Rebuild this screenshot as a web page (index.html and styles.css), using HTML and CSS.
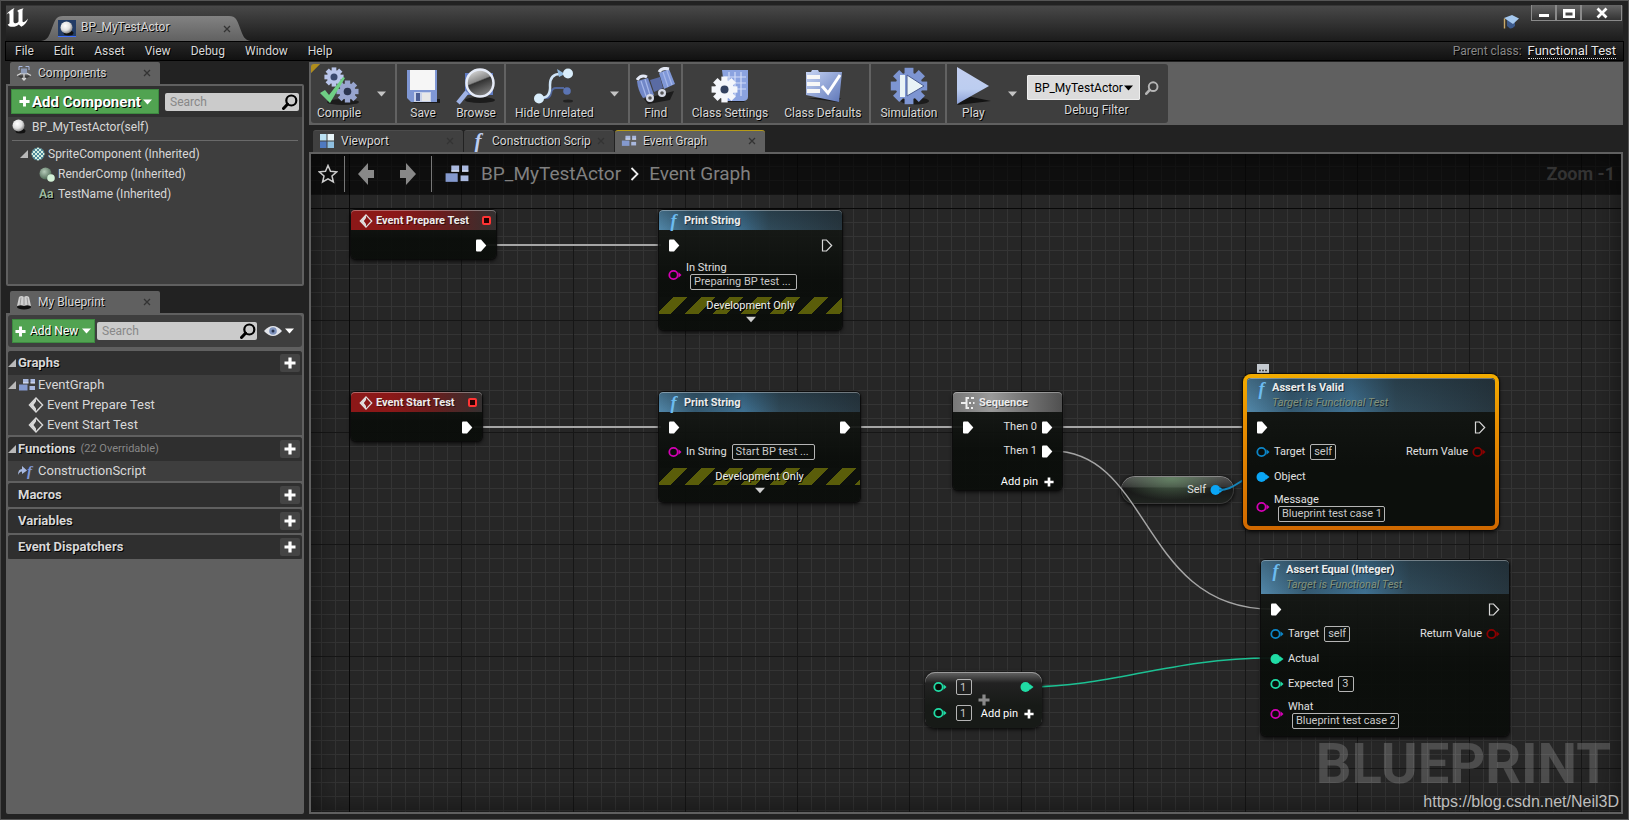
FILE: index.html
```html
<!DOCTYPE html>
<html lang="en">
<head>
<meta charset="utf-8">
<title>BP_MyTestActor</title>
<link rel="stylesheet" href="styles.css">
</head>
<body>
<svg class="defs" aria-hidden="true">
  <defs>
    <linearGradient id="g-blue" x1="0" y1="0" x2="1" y2="1"><stop offset="0" stop-color="#c9d6f5"/><stop offset="1" stop-color="#5d76b8"/></linearGradient>
    <linearGradient id="g-play" x1="0" y1="0" x2="0" y2="1"><stop offset="0" stop-color="#c3cff0"/><stop offset=".6" stop-color="#bccdf0"/><stop offset="1" stop-color="#8b9fd6"/></linearGradient>
    <radialGradient id="g-ball" cx=".4" cy=".35" r=".65"><stop offset="0" stop-color="#fff"/><stop offset=".6" stop-color="#e0e0e0"/><stop offset="1" stop-color="#888"/></radialGradient>
    <radialGradient id="g-green" cx=".4" cy=".35" r=".65"><stop offset="0" stop-color="#b5cbb9"/><stop offset="1" stop-color="#4f6b57"/></radialGradient>
    <linearGradient id="g-lens" x1="0" y1="0" x2=".4" y2="1"><stop offset="0" stop-color="#eee"/><stop offset=".5" stop-color="#8b8b8b"/><stop offset=".55" stop-color="#333"/><stop offset="1" stop-color="#777"/></linearGradient>
    <linearGradient id="g-tab" x1="0" y1="0" x2="0" y2="1"><stop offset="0" stop-color="#828282"/><stop offset="1" stop-color="#616161"/></linearGradient>
    <pattern id="p-check" width="4" height="4" patternUnits="userSpaceOnUse"><rect width="4" height="4" fill="#d5efe0"/><rect width="2" height="2" fill="#4f8a9c"/><rect x="2" y="2" width="2" height="2" fill="#4f8a9c"/></pattern>
  </defs>
  <symbol id="i-plus" viewBox="0 0 12 12"><path d="M4.4 0.5h3.2v3.9h3.9v3.2H7.600v3.900H4.400V7.600H.5V4.400h3.900z" fill="currentColor"/></symbol>
  <symbol id="i-caret" viewBox="0 0 9 6"><path d="M0 0.500h9L4.500 5.500z" fill="currentColor"/></symbol>
  <symbol id="i-close" viewBox="0 0 8 8"><path d="M1 1l6 6M7 1L1 7" stroke="currentColor" stroke-width="1.300" fill="none"/></symbol>
  <symbol id="i-search" viewBox="0 0 16 16"><circle cx="9.300" cy="6.500" r="5" fill="none" stroke="currentColor" stroke-width="2.200"/><path d="M5.500 10.200L1.500 14.500" stroke="currentColor" stroke-width="3" stroke-linecap="round"/></symbol>
  <symbol id="i-tri" viewBox="0 0 8 8"><path d="M8 0v8H0z" fill="#b9b9b9"/></symbol>
  <symbol id="i-ball" viewBox="0 0 14 15"><ellipse cx="8.500" cy="12" rx="5" ry="2.500" fill="#111"/><circle cx="6.500" cy="6.500" r="6" fill="url(#g-ball)"/></symbol>
  <symbol id="i-event" viewBox="0 0 16 16"><path d="M8 1l6.600 7L8 15 1.400 8z" fill="none" stroke="currentColor" stroke-width="1.400"/><path d="M8 1.500v3L5.500 8 8 11.500v3L1.800 8z" fill="currentColor"/></symbol>
  <symbol id="i-graph" viewBox="0 0 18 14"><path d="M5 1h5.500v4H5zM12.500 1H17v4h-4.500z" fill="#a9b8de"/><path d="M1 6.500h8.500v6H1z" fill="#8499ce"/><path d="M11.500 8H17v4h-5.500z" fill="#a9b8de"/><path d="M5 5h5.500M12.500 5H17" stroke="#e6edff"/></symbol>
  <symbol id="i-exec" viewBox="0 0 12 13"><path d="M1 1.500q0-1 1-1h4L11.300 6.500 6 12.500H2q-1 0-1-1z" fill="#fff"/></symbol>
  <symbol id="i-exec-o" viewBox="0 0 12 13"><path d="M1.500 1h4L10.700 6.500 5.500 12h-4z" fill="none" stroke="#d8d8d8" stroke-width="1.200"/></symbol>
  <symbol id="i-pin" viewBox="0 0 14 12"><circle cx="5.500" cy="6" r="4.200" fill="#0a0d0a" stroke="currentColor" stroke-width="1.800"/><path d="M10.500 3.200L13.500 6l-3 2.800z" fill="currentColor"/></symbol>
  <symbol id="i-pin-f" viewBox="0 0 14 12"><circle cx="5.500" cy="6" r="5" fill="currentColor"/><path d="M10 3.200L13.500 6l-3.500 2.800z" fill="currentColor"/></symbol>
  <symbol id="i-gear" viewBox="-12 -12 24 24"><g fill="currentColor"><rect x="-2.800" y="-11.500" width="5.600" height="23"/><rect x="-2.800" y="-11.500" width="5.600" height="23" transform="rotate(45)"/><rect x="-2.800" y="-11.500" width="5.600" height="23" transform="rotate(90)"/><rect x="-2.800" y="-11.500" width="5.600" height="23" transform="rotate(135)"/><circle r="8.500"/></g></symbol>
</svg>

<div class="window">
  <header class="titlebar">
    <svg class="logo" viewBox="0 0 24 20" role="img" aria-label="Unreal"><path d="M0 7C2 4 5 1.500 8.500 0 7.600 1.300 7.500 2 7.500 4v9.500c0 1 .9 1.800 2.200 1.800 1.300 0 2.300-.9 2.800-1.700V4.800c0-1.300-.6-1.800-1.700-1.600C13 1.500 15 .8 17.800.3c-1 .8-1.300 1.600-1.300 3.200v9.300c0 1.200.5 1.500 1.200 1.300 1.200-.4 2.500-1.500 4.300-3.600-.8 3.600-3.200 6.400-6.700 8.300l-2.500-2.300c-1.700 1.600-3.800 2.300-6.300 2.300-2.300 0-4.800-1-4.800-2.600 1.300.4 1.800-.3 1.800-1.600V6.700c0-1.200-.9-1.500-1.600-1.300C1.200 5.600.6 6.300 0 7z" fill="#fff"/></svg>
    <div class="app-tab">
      <svg class="app-tab-shape" viewBox="0 0 210 25" preserveAspectRatio="none" aria-hidden="true"><path d="M0 25C7 24 8 20 11 12 14 4 15 0 22 0h166c7 0 8 4 11 12 3 8 4 12 11 13z" fill="url(#g-tab)"/></svg>
      <span class="app-tab-icon"><svg width="14" height="15"><use href="#i-ball"/></svg></span>
      <span class="app-tab-label">BP_MyTestActor</span>
      <button class="close" aria-label="Close tab"><svg width="8" height="8"><use href="#i-close"/></svg></button>
    </div>
    <svg class="cap" viewBox="0 0 16 16" aria-hidden="true"><path d="M4 6l8 2v4q-3 3-5 2.500L4 12z" fill="#3c5a8c"/><path d="M1 4l8-3 7 3.500L10 10z" fill="#a5c8ee"/><path d="M1.500 4.500v10" stroke="#c9a867" stroke-width="1.400"/></svg>
    <div class="win-buttons">
      <button class="win-btn" aria-label="Minimize"><svg width="12" height="12" viewBox="0 0 12 12"><rect x="1" y="7" width="10" height="3" fill="#fff"/></svg></button>
      <button class="win-btn" aria-label="Maximize"><svg width="12" height="12" viewBox="0 0 12 12"><path d="M0 2h12v9H0zM2.500 5.500v3h7v-3z" fill="#fff" fill-rule="evenodd"/></svg></button>
      <button class="win-btn win-close" aria-label="Close"><svg width="12" height="12" viewBox="0 0 12 12"><path d="M1.500 1.500l9 9M10.500 1.500l-9 9" stroke="#fff" stroke-width="2.800"/></svg></button>
    </div>
  </header>

  <nav class="menubar">
    <button>File</button><button>Edit</button><button>Asset</button><button>View</button><button>Debug</button><button>Window</button><button>Help</button>
    <span class="parent">Parent class:</span>
    <a class="parent-link" href="#">Functional Test</a>
  </nav>

  <div class="workspace">
    <aside class="sidebar">
      <section class="dock">
        <div class="dock-tab">
          <svg width="16" height="16" viewBox="0 0 16 16" aria-hidden="true"><path d="M1 10.500h14L8 15z" fill="#3c3c3c"/><path d="M1 10.500l4-2h6l4 2M8 9v6M6 13l2 2 2-2" fill="none" stroke="#d6d6d6" stroke-width="1.300"/><path d="M5 3.500h6v5H5z" fill="#8d9ab5"/><path d="M3 5V1.500h3.500M9.500 1.500H13V5" fill="none" stroke="#a9b8de"/></svg>
          <h2>Components</h2>
          <button class="close" aria-label="Close Components"><svg width="8" height="8"><use href="#i-close"/></svg></button>
        </div>
        <div class="panel components">
          <div class="panel-bar">
            <button class="green big"><svg width="11" height="11"><use href="#i-plus"/></svg>Add Component<svg width="9" height="6"><use href="#i-caret"/></svg></button>
            <label class="search"><input type="text" placeholder="Search" aria-label="Search components"><svg width="16" height="16"><use href="#i-search"/></svg></label>
          </div>
          <div class="self-row"><svg width="14" height="15"><use href="#i-ball"/></svg>BP_MyTestActor(self)</div>
          <ul class="tree">
            <li class="lvl-1"><svg width="8" height="8"><use href="#i-tri"/></svg><svg width="14" height="14" viewBox="0 0 14 14"><circle cx="7" cy="7" r="6.500" fill="url(#p-check)"/></svg>SpriteComponent (Inherited)</li>
            <li class="lvl-2"><svg width="16" height="15" viewBox="0 0 16 15"><circle cx="6.500" cy="6.500" r="6" fill="url(#g-green)"/><circle cx="12" cy="11" r="3.800" fill="#d2f0d6"/></svg>RenderComp (Inherited)</li>
            <li class="lvl-2"><i class="aa"></i>TestName (Inherited)</li>
          </ul>
        </div>
      </section>

      <section class="dock grow">
        <div class="dock-tab">
          <svg width="16" height="16" viewBox="0 0 16 16" aria-hidden="true"><ellipse cx="8" cy="13" rx="7" ry="2.500" fill="#111"/><path d="M3 3q2.500-2 5 0 2.500-2 5 0l2 9q-3.500-1.500-7 0-3.500-1.500-7 0z" fill="#cfcfcf"/><path d="M8 3v9M5 3.500L4 11M11 3.500l1 7.500" stroke="#8b8b8b" stroke-width=".8"/></svg>
          <h2>My Blueprint</h2>
          <button class="close" aria-label="Close My Blueprint"><svg width="8" height="8"><use href="#i-close"/></svg></button>
        </div>
        <div class="panel blueprint">
          <div class="bp-bar">
            <button class="green"><svg width="11" height="11"><use href="#i-plus"/></svg>Add New<svg width="9" height="6"><use href="#i-caret"/></svg></button>
            <label class="search"><input type="text" placeholder="Search" aria-label="Search blueprint"><svg width="16" height="16"><use href="#i-search"/></svg></label>
            <button class="eye" aria-label="View options"><svg width="18" height="12" viewBox="0 0 18 12"><path d="M0 6Q9-4 18 6 9 16 0 6z" fill="#e2e4ea"/><circle cx="9" cy="6" r="3.800" fill="#7f93bd"/><circle cx="9" cy="6" r="1.500" fill="#26324d"/></svg><svg width="9" height="6"><use href="#i-caret"/></svg></button>
          </div>
          <div class="cat">
            <div class="cat-head"><svg width="8" height="8"><use href="#i-tri"/></svg><h3>Graphs</h3><button aria-label="Add graph"><svg width="12" height="12"><use href="#i-plus"/></svg></button></div>
            <ul>
              <li><svg width="8" height="8"><use href="#i-tri"/></svg><svg width="18" height="14"><use href="#i-graph"/></svg>EventGraph</li>
              <li class="sub"><svg width="16" height="16"><use href="#i-event"/></svg>Event Prepare Test</li>
              <li class="sub"><svg width="16" height="16"><use href="#i-event"/></svg>Event Start Test</li>
            </ul>
          </div>
          <div class="cat">
            <div class="cat-head"><svg width="8" height="8"><use href="#i-tri"/></svg><h3>Functions</h3><small>(22 Overridable)</small><button aria-label="Add function"><svg width="12" height="12"><use href="#i-plus"/></svg></button></div>
            <ul>
              <li class="fn"><svg width="9" height="10" viewBox="0 0 9 10"><path d="M0 9Q0 3 4 3V0l5 4.500L4 8V5.500Q1.500 5.500 0 9z" fill="#a8b9e0"/></svg><i class="f f-sm"></i>ConstructionScript</li>
            </ul>
          </div>
          <div class="cat"><div class="cat-head bare"><h3>Macros</h3><button aria-label="Add macro"><svg width="12" height="12"><use href="#i-plus"/></svg></button></div></div>
          <div class="cat"><div class="cat-head bare"><h3>Variables</h3><button aria-label="Add variable"><svg width="12" height="12"><use href="#i-plus"/></svg></button></div></div>
          <div class="cat"><div class="cat-head bare"><h3>Event Dispatchers</h3><button aria-label="Add dispatcher"><svg width="12" height="12"><use href="#i-plus"/></svg></button></div></div>
        </div>
      </section>
    </aside>

    <main class="main">
      <div class="toolbar">
        <div class="tools">
          <div class="group">
            <button class="tool first"><svg width="40" height="38" viewBox="0 0 40 38"><ellipse cx="24" cy="35" rx="16" ry="3" fill="#1c1c1c"/><svg x="5" y="0" width="20" height="20"><use href="#i-gear" color="#b9c5ea"/></svg><circle cx="15" cy="10" r="3.500" fill="#3b4a70"/><svg x="17" y="13" width="23" height="23"><use href="#i-gear" color="#98a5cf"/></svg><circle cx="28.500" cy="24.500" r="3.800" fill="#2c3550"/><path d="M1 26l5-3 4 5L24 10l2 1L11 36z" fill="#6fcf85"/></svg>Compile</button>
            <button class="drop wide" aria-label="Compile options"><svg width="9" height="6"><use href="#i-caret"/></svg></button>
          </div>
          <div class="group">
            <button class="tool"><svg width="34" height="38" viewBox="0 0 34 38"><path d="M5 32h29v4H8z" fill="#1a1a1a"/><path d="M1 3h30v32H5l-4-4z" fill="#7f97d4"/><path d="M4 3h25v20H4z" fill="#f6f6f6"/><path d="M8 25h17v10H8z" fill="#c9d2ea"/><path d="M10 26h4v8h-4z" fill="#4b5d93"/><path d="M16 26h8v8h-8z" fill="#e8e8e8"/></svg>Save</button>
            <button class="tool"><svg width="40" height="38" viewBox="0 0 40 38"><ellipse cx="24" cy="33" rx="15" ry="3" fill="#1c1c1c"/><path d="M9 6h28v22H9z" fill="#5f7ac2"/><path d="M11 25L2 36" stroke="#9fb3e6" stroke-width="4.500"/><circle cx="24" cy="16" r="13.500" fill="url(#g-lens)" stroke="#e6ebf7" stroke-width="2.500"/></svg>Browse</button>
          </div>
          <div class="group">
            <button class="tool"><svg width="40" height="38" viewBox="0 0 40 38"><path d="M8 31h4q4 0 5-5t5-5h8" fill="none" stroke="#52679c" stroke-width="2"/><circle cx="33" cy="24" r="3.800" fill="#5b74b3"/><ellipse cx="34" cy="34" rx="5" ry="1.500" fill="#222"/><path d="M7 31q10 0 9-13 0-11 10-11" fill="none" stroke="#cfe4f7" stroke-width="2.500"/><path d="M23 2l8 5-6 3z" fill="#93bbe0"/><circle cx="34" cy="6.500" r="5" fill="#d9edfb"/><circle cx="5" cy="31.500" r="5" fill="#d9edfb"/></svg>Hide Unrelated</button>
            <button class="drop" aria-label="Hide unrelated options"><svg width="9" height="6"><use href="#i-caret"/></svg></button>
          </div>
          <div class="group">
            <button class="tool"><svg width="40" height="38" viewBox="0 0 40 38"><path d="M8 32l30-8-4 9-22 4z" fill="#1c1c1c"/><path d="M1 14l11-3 6 17-11 3q-5-7-6-17z" fill="#7288c8"/><path d="M23 6l10-4 6 15-11 5z" fill="#8098d8"/><path d="M14 13l10-3 3 11-9 4z" fill="#5a6ba3"/><path d="M1 13q4-6 10-3M23 5q3-5 10-3" stroke="#e3e8f5" stroke-width="3" fill="none"/><path d="M5 14l5 15M9 12l5 16M27 5l5 15M31 4l5 14" stroke="#a6b8ea" stroke-width="1.200"/><circle cx="14" cy="31" r="4" fill="#d6dae6"/><circle cx="26" cy="26" r="4" fill="#d6dae6"/><circle cx="14" cy="31" r="1.800" fill="#555"/><circle cx="26" cy="26" r="1.800" fill="#555"/></svg>Find</button>
          </div>
          <div class="group">
            <button class="tool"><svg width="40" height="38" viewBox="0 0 40 38"><path d="M12 30l26 0-4 5H14z" fill="#1c1c1c"/><path d="M12 3h26v27q0 3-4 4H16z" fill="#8ba3e0"/><path d="M14 10h22M14 16h22M14 22h22M19 5v24M25 5v24M31 5v24" stroke="#d2dcf7" stroke-width="1.200"/><svg x="1" y="9" width="27" height="27"><use href="#i-gear" color="#f4f6fb"/></svg><circle cx="14.500" cy="22.500" r="4" fill="#33415f"/></svg>Class Settings</button>
            <button class="tool"><svg width="40" height="38" viewBox="0 0 40 38"><path d="M4 31l34 0-4 4z" fill="#1c1c1c"/><path d="M3 5h5l1-2h6l1 2h23l-3 30-33-7z" fill="url(#g-blue)"/><path d="M4 8h13v4H4zM4 15h13v4H4zM4 22h13v4H4z" fill="#f7f7f7"/><path d="M19 19l6 7L37 8" stroke="#fff" stroke-width="3" fill="none"/></svg>Class Defaults</button>
          </div>
          <div class="group">
            <button class="tool"><svg width="40" height="38" viewBox="0 0 40 38"><ellipse cx="26" cy="34" rx="14" ry="3.500" fill="#1c1c1c"/><svg x="1" y="0" width="38" height="38"><use href="#i-gear" color="#7d95d2"/></svg><path d="M11 8h5v22h-5z" fill="#e8f3f6"/><path d="M18 8l17 11-17 10z" fill="#e8f3f6" stroke="#4a5c8f"/></svg>Simulation</button>
          </div>
          <div class="group last">
            <button class="tool"><svg width="36" height="38" viewBox="0 0 36 38"><path d="M2 38L36 34 12 29z" fill="#141414"/><path d="M2 0l32 19L2 37z" fill="url(#g-play)"/></svg>Play</button>
            <button class="drop wide" aria-label="Play options"><svg width="9" height="6"><use href="#i-caret"/></svg></button>
          </div>
          <div class="debug">
            <div class="debug-row">
              <span class="select"><select id="debug-filter"><option>BP_MyTestActor</option></select><svg width="9" height="6"><use href="#i-caret"/></svg></span>
              <button class="find-actor" aria-label="Find in world"><svg width="14" height="14"><use href="#i-search"/></svg></button>
            </div>
            <label for="debug-filter">Debug Filter</label>
          </div>
        </div>
      </div>

      <div class="doc-tabs">
        <div class="doc-tab"><svg width="16" height="16" viewBox="0 0 16 16"><path d="M1 1h6.500v6.500H1z" fill="#b9e0f2"/><path d="M8.500 1H15v6.500H8.500z" fill="#e9f6fa"/><path d="M1 8.500h6.500V15H1z" fill="#4f79c0"/><path d="M8.500 8.500H15V15H8.500z" fill="#8fbfe0"/></svg><span>Viewport</span><button class="close" aria-label="Close Viewport"><svg width="8" height="8"><use href="#i-close"/></svg></button></div>
        <div class="doc-tab"><i class="f f-tab"></i><span>Construction Scrip</span><button class="close" aria-label="Close Construction Script"><svg width="8" height="8"><use href="#i-close"/></svg></button></div>
        <div class="doc-tab active"><svg width="16" height="14"><use href="#i-graph"/></svg><span>Event Graph</span><button class="close" aria-label="Close Event Graph"><svg width="8" height="8"><use href="#i-close"/></svg></button></div>
      </div>

      <div class="canvas">
        <div class="crumbs">
          <button aria-label="Favorite"><svg width="20" height="20" viewBox="0 0 20 20"><path d="M10 1.500l2.500 5.800 6.200.5-4.700 4.100 1.400 6.100L10 14.800 4.600 18 6 11.900 1.300 7.800l6.200-.5z" fill="none" stroke="#ccc" stroke-width="1.500"/></svg></button>
          <span class="bar"></span>
          <button aria-label="Back"><svg width="18" height="22" viewBox="0 0 18 22"><path d="M1 11L11 0v7h6v8h-6v7z" fill="#888"/></svg></button>
          <button aria-label="Forward"><svg width="18" height="22" viewBox="0 0 18 22"><path d="M17 11L7 0v7H1v8h6v7z" fill="#888"/></svg></button>
          <span class="bar"></span>
          <svg width="26" height="20"><use href="#i-graph"/></svg>
          <a href="#">BP_MyTestActor</a>
          <svg class="chev" width="9" height="14" viewBox="0 0 9 14"><path d="M1.500 1L7.500 7l-6 6" fill="none" stroke="#eee" stroke-width="1.800"/></svg>
          <span class="here">Event Graph</span>
          <span class="zoom">Zoom -1</span>
        </div>

        <div class="brand">BLUEPRINT</div>

        <article class="node-self at-self"><span>Self</span><svg class="obj" width="14" height="12"><use href="#i-pin-f"/></svg></article>

        <svg class="wires" width="1300" height="660" aria-hidden="true">
          <g fill="none" stroke="#a5a5a5" stroke-width="2">
            <path d="M176 91H350M163 273H350M540 273H652M741 273H946"/>
            <path d="M741 297C840 297 830 455 960 455" stroke-width="1.500"/>
            <path d="M908 336C926 336 928 322 950 322" stroke="#1583b8"/>
            <path d="M718 533C800 533 860 504 960 504" stroke="#1cc193" stroke-width="1.500"/>
          </g>
        </svg>

        <article class="node at-prepare">
          <header class="red"><svg width="14" height="14"><use href="#i-event"/></svg><h4>Event Prepare Test</h4><i class="delegate"></i></header>
          <div class="row exec"><span></span><svg width="12" height="13"><use href="#i-exec"/></svg></div>
        </article>

        <article class="node at-print-1">
          <header class="blue"><i class="f f-node"></i><h4>Print String</h4></header>
          <div class="row exec"><svg width="12" height="13"><use href="#i-exec"/></svg><svg width="12" height="13"><use href="#i-exec-o"/></svg></div>
          <div class="row tall"><svg class="str" width="14" height="12"><use href="#i-pin"/></svg><label class="stack">In String<input class="w-107" type="text" value="Preparing BP test ..."></label></div>
          <div class="dev">Development Only</div>
          <button class="expand" aria-label="Collapse"><svg width="10" height="7"><use href="#i-caret"/></svg></button>
        </article>

        <article class="node at-start">
          <header class="red"><svg width="14" height="14"><use href="#i-event"/></svg><h4>Event Start Test</h4><i class="delegate"></i></header>
          <div class="row exec"><span></span><svg width="12" height="13"><use href="#i-exec"/></svg></div>
        </article>

        <article class="node at-print-2">
          <header class="blue"><i class="f f-node"></i><h4>Print String</h4></header>
          <div class="row exec"><svg width="12" height="13"><use href="#i-exec"/></svg><svg width="12" height="13"><use href="#i-exec"/></svg></div>
          <div class="row"><svg class="str" width="14" height="12"><use href="#i-pin"/></svg><label>In String<input class="w-83" type="text" value="Start BP test ..."></label></div>
          <div class="dev">Development Only</div>
          <button class="expand" aria-label="Collapse"><svg width="10" height="7"><use href="#i-caret"/></svg></button>
        </article>

        <article class="node at-seq">
          <header class="grey"><svg width="14" height="12" viewBox="0 0 14 12"><path d="M0 6h6M8 1H5.500v10H8M10 1h3M8 6h2M12 6h1.500M10 11h2" fill="none" stroke="#eee" stroke-width="2"/></svg><h4>Sequence</h4></header>
          <div class="row exec"><svg width="12" height="13"><use href="#i-exec"/></svg><span class="out">Then 0<svg width="12" height="13"><use href="#i-exec"/></svg></span></div>
          <div class="row exec"><span></span><span class="out">Then 1<svg width="12" height="13"><use href="#i-exec"/></svg></span></div>
          <div class="row add"><button class="add-pin">Add pin<svg width="10" height="10"><use href="#i-plus"/></svg></button></div>
        </article>

        <svg class="bubble at-bubble" width="14" height="12" viewBox="0 0 14 12" aria-hidden="true"><path d="M1 0h12v9H7l-2 2.500L4 9H1z" fill="#c3c9cf"/><path d="M3 6.500h2M6 6.500h2M9 6.500h2" stroke="#444" stroke-width="1.500"/></svg>

        <article class="node selected at-valid">
          <header class="blue two"><i class="f f-node"></i><div><h4>Assert Is Valid</h4><p>Target is Functional Test</p></div></header>
          <div class="row exec"><svg width="12" height="13"><use href="#i-exec"/></svg><svg width="12" height="13"><use href="#i-exec-o"/></svg></div>
          <div class="row"><svg class="obj dim" width="14" height="12"><use href="#i-pin"/></svg><label>Target<input class="w-26" type="text" value="self"></label><span class="out">Return Value<svg class="bool" width="14" height="12"><use href="#i-pin"/></svg></span></div>
          <div class="row"><svg class="obj" width="14" height="12"><use href="#i-pin-f"/></svg><span>Object</span></div>
          <div class="row tall"><svg class="str" width="14" height="12"><use href="#i-pin"/></svg><label class="stack">Message<input class="w-107" type="text" value="Blueprint test case 1"></label></div>
        </article>

        <article class="node at-equal">
          <header class="blue two"><i class="f f-node"></i><div><h4>Assert Equal (Integer)</h4><p>Target is Functional Test</p></div></header>
          <div class="row exec"><svg width="12" height="13"><use href="#i-exec"/></svg><svg width="12" height="13"><use href="#i-exec-o"/></svg></div>
          <div class="row"><svg class="obj dim" width="14" height="12"><use href="#i-pin"/></svg><label>Target<input class="w-26" type="text" value="self"></label><span class="out">Return Value<svg class="bool" width="14" height="12"><use href="#i-pin"/></svg></span></div>
          <div class="row"><svg class="int" width="14" height="12"><use href="#i-pin-f"/></svg><span>Actual</span></div>
          <div class="row"><svg class="int" width="14" height="12"><use href="#i-pin"/></svg><label>Expected<input class="w-16" type="text" value="3"></label></div>
          <div class="row tall"><svg class="str" width="14" height="12"><use href="#i-pin"/></svg><label class="stack">What<input class="w-107" type="text" value="Blueprint test case 2"></label></div>
        </article>

        <article class="node-add at-add">
          <div class="ins">
            <div><svg class="int" width="14" height="12"><use href="#i-pin"/></svg><input class="w-16" type="text" value="1" aria-label="First operand"></div>
            <div><svg class="int" width="14" height="12"><use href="#i-pin"/></svg><input class="w-16" type="text" value="1" aria-label="Second operand"></div>
          </div>
          <svg class="op" width="12" height="12"><use href="#i-plus"/></svg>
          <div class="outs"><svg class="int" width="14" height="12"><use href="#i-pin-f"/></svg><button class="add-pin">Add pin<svg width="10" height="10"><use href="#i-plus"/></svg></button></div>
        </article>

        <div class="credit">https://blog.csdn.net/Neil3D</div>
      </div>
    </main>
  </div>
</div>
</body>
</html>
```
FILE: styles.css
```css
* { box-sizing: border-box; }
html, body { height: 100%; }
body { margin: 0; background: #222; color: #d8d8d8; font: 12px/16px Roboto, "Noto Sans", sans-serif; overflow: hidden; }
button { background: none; border: 0; padding: 0; margin: 0; color: inherit; font: inherit; text-shadow: inherit; cursor: pointer; }
h2, h3, h4, p, ul { margin: 0; padding: 0; font: inherit; list-style: none; }
svg { display: block; flex: none; }
input, select { font: inherit; color: inherit; margin: 0; }
.defs { position: absolute; width: 0; height: 0; }

.window { height: 100%; display: flex; flex-direction: column; padding: 0 5px 5px; background: #222; border: 1px solid #555; border-left-color: #4a4a4a; text-shadow: 1px 1px 0 #000; }

/* title bar */
.titlebar { height: 40px; display: flex; align-items: flex-start; background: linear-gradient(#222 0, #222 4px, #484848 5px, #262626 32px, #1c1c1c); }
.logo { width: 24px; height: 20px; margin-top: 7px; }
.app-tab { position: relative; width: 210px; height: 25px; margin: 15px 0 0 11px; padding: 0 20px 0 17px; display: flex; align-items: center; gap: 5px; }
.app-tab > * { position: relative; }
.app-tab .app-tab-shape { position: absolute; inset: 0; width: 100%; height: 100%; }
.app-tab-icon { width: 18px; height: 17px; display: grid; place-items: center; background: #223c66; border-bottom: 1px solid #3f6fff; }
.app-tab-label { flex: 1; padding-bottom: 3px; }
.close { color: #333; }
.cap { width: 16px; height: 16px; margin: 13px 12px 0 auto; }
.win-buttons { display: flex; margin-top: 4px; padding-right: 1px; }
.win-btn { width: 25px; height: 16px; display: grid; place-items: center; border: 1px solid #8a8a8a; border-top: 0; background: linear-gradient(#666, #333); }
.win-close { width: 41px; }

/* menu */
.menubar { height: 20px; display: flex; align-items: center; background: linear-gradient(#262626, #111); border: 1px solid #000; margin: 0 -1px; padding-right: 7px; }
.menubar button { padding: 0 10px; }
.menubar button:first-child { padding-left: 9px; }
.parent { margin-left: auto; color: #888; }
.parent-link { margin-left: 6px; color: #e6e6e6; text-decoration: none; border-bottom: 1px dotted #ddd; font-size: 13px; line-height: 15px; }

.workspace { flex: 1; min-height: 0; display: flex; gap: 5px; padding-top: 1px; }

/* left side */
.sidebar { width: 298px; flex: none; display: flex; flex-direction: column; gap: 5px; }
.dock { display: flex; flex-direction: column; }
.dock.grow { flex: 1; min-height: 0; }
.dock-tab { width: 150px; height: 22px; margin-left: 4px; padding: 0 9px 0 6px; display: flex; align-items: center; gap: 6px; background: #606060; border-radius: 2px 2px 0 0; }
.dock-tab h2 { flex: 1; white-space: nowrap; }
.panel { border: 2px solid #606060; border-radius: 0 2px 2px 2px; }
.components { height: 202px; background: #3e3e3e; }
.panel-bar { height: 31px; padding: 3px 3px 3px; display: flex; align-items: center; gap: 6px; background: #303030; }
.green { height: 24px; padding: 0 6px 0 3px; display: flex; align-items: center; gap: 4px; background: #51a351; border: 1px solid #3d8a40; color: #fff; white-space: nowrap; }
.green.big { width: 148px; height: 25px; padding: 0 8px 0 7px; justify-content: space-between; gap: 2px; font-size: 15px; font-weight: 700; }
.search { flex: 1; min-width: 0; height: 18px; display: flex; align-items: center; padding-right: 1px; background: #cbcbcb; border-radius: 2px; color: #000; }
.search input { flex: 1; min-width: 0; width: 0; border: 0; padding: 0 5px; background: none; outline: 0; }
.search input::placeholder { color: #888; text-shadow: none; opacity: 1; }
.self-row { height: 24px; margin: 0 4px; display: flex; align-items: center; gap: 6px; border-bottom: 1px solid #6a6a6a; padding-bottom: 4px; text-shadow: none; }
.tree { padding-top: 3px; text-shadow: none; }
.tree li { height: 20px; display: flex; align-items: center; gap: 3px; }
.lvl-1 { padding-left: 12px; }
.lvl-2 { padding-left: 31px; }
.aa { width: 16px; color: #9ab79c; font: 700 12px/16px Roboto, sans-serif; text-shadow: 1px 1px 0 #000; }
.aa::before { content: "Aa"; }

.blueprint { flex: 1; min-height: 0; background: #606060; display: flex; flex-direction: column; gap: 2px; }
.bp-bar { height: 32px; margin-bottom: 2px; padding: 0 8px 0 4px; display: flex; align-items: center; gap: 2px; background: #3e3e3e; border-radius: 3px; }
.bp-bar .green { width: 83px; justify-content: space-between; padding: 0 5px 0 2px; }
.eye { display: flex; align-items: center; gap: 3px; margin-left: 5px; color: #fff; }
.cat { background: #3e3e3e; border-radius: 3px 3px 0 0; font-size: 13px; }
.cat-head { height: 24px; padding: 0 2px 0 0; display: flex; align-items: center; gap: 2px; background: #2f2f2f; border-radius: 3px 3px 0 0; }
.cat-head.bare { padding-left: 10px; border-radius: 3px; }
.cat-head h3 { font-weight: 700; }
.cat-head small { margin-left: 3px; font-size: 11px; color: #888; text-shadow: none; }
.cat-head button { width: 20px; height: 18px; margin-left: auto; display: grid; place-items: center; background: #444; border-radius: 2px; color: #fff; }
.cat li { height: 20px; display: flex; align-items: center; gap: 3px; text-shadow: none; }
.cat li:not(.sub):not(.fn) { gap: 2px; }
.cat li.sub { padding-left: 20px; }
.cat li.fn { padding-left: 10px; gap: 0; }

.f { flex: none; font: italic 700 18px/18px "Liberation Serif", serif; color: #6cbcf0; text-shadow: none; }
.f::before { content: "f"; }
.f-sm { width: 11px; font-size: 15px; color: #8299d6; }
.f-tab { width: 16px; font-size: 21px; color: #bccdf2; text-align: center; }

/* right side */
.main { flex: 1; min-width: 0; display: flex; flex-direction: column; }
.toolbar { background: #606060; padding: 2px; display: flex; }
.tools { height: 59px; display: flex; background: linear-gradient(135deg, #b08d1c 0, #b08d1c 6px, transparent 7px), #3e3e3e; border-radius: 3px; }
.group { display: flex; border-right: 2px solid #626262; margin-right: 1px; }
.group.last { border-right: 0; }
.tool { min-width: 50px; padding: 3px 8px 0; display: flex; flex-direction: column; align-items: center; gap: 1px; line-height: 14px; white-space: nowrap; }
.tool > svg { margin: 0 -4px; }
.tool.first { padding: 3px 6px 0; }
.drop { width: 26px; display: grid; place-items: center; color: #c4c4c4; }
.drop.wide { width: 28px; }
.debug { padding: 11px 9px 0 0; display: flex; flex-direction: column; align-items: center; gap: 2px; }
.debug-row { display: flex; align-items: center; gap: 5px; }
.debug label { padding-left: 6px; }
.select { position: relative; color: #000; text-shadow: none; }
.select select { appearance: none; width: 113px; height: 25px; padding: 0 14px 0 6px; border: 1px solid #eee; border-radius: 1px; background: #dcdcdc; }
.select svg { position: absolute; right: 7px; top: 10px; pointer-events: none; }
.find-actor { color: #b5b5b5; }

.doc-tabs { display: flex; gap: 1px; padding: 5px 0 0 4px; }
.doc-tab { width: 150px; height: 22px; padding: 0 9px 1px 6px; display: flex; align-items: center; gap: 6px; background: #404040; border-top: 1px solid #4c4c4c; border-radius: 3px 3px 0 0; }
.doc-tab span { flex: 1; min-width: 0; white-space: nowrap; }
.doc-tab.active { background: #606060; border-top-color: #b59a18; }

.canvas {
  flex: 1; min-height: 0; position: relative; overflow: hidden; border: 2px solid #606060;
  background-color: #262626;
  background-image: linear-gradient(#080808 1px, transparent 1px), linear-gradient(90deg, #080808 1px, transparent 1px), linear-gradient(#161616 1px, transparent 1px), linear-gradient(90deg, #161616 1px, transparent 1px), linear-gradient(#343434 1px, transparent 1px), linear-gradient(90deg, #343434 1px, transparent 1px);
  background-size: 100% 1200px, 2400px 100%, 112px 112px, 112px 112px, 14px 14px, 14px 14px;
  background-position: 0 54px, 38px 0, 38px 54px, 38px 54px, 38px 54px, 38px 54px;
  color: #e0e0e0; font-size: 11px; line-height: 14px; text-shadow: none;
}
.canvas::before { content: ""; position: absolute; inset: 0; box-shadow: inset 0 0 30px rgba(0, 0, 0, .55); pointer-events: none; }
.crumbs { position: relative; height: 41px; padding: 0 6px 2px 7px; display: flex; align-items: center; background: rgba(0, 0, 0, .6); color: #808080; font-size: 19px; line-height: 24px; }
.bar { width: 1px; height: 36px; background: #777; margin: 0 12px 0 6px; }
.crumbs button + button { margin-left: 24px; }
.crumbs button + .bar { margin-left: 14px; }
.crumbs button:first-child + .bar { margin-left: 6px; }
.crumbs a { color: inherit; text-decoration: none; margin-left: 11px; }
.chev { margin: 0 10px 0 9px; }
.zoom { margin-left: auto; color: #333; font-weight: 700; font-size: 18px; }

.brand { position: absolute; right: 10px; bottom: 27px; color: rgba(255, 255, 255, .18); font: 700 56px/42px "Liberation Sans Narrow", Roboto, sans-serif; }
.credit { position: absolute; right: 2px; bottom: 0; color: #bdbdbd; font: 16px/20px "Liberation Sans", Arial, sans-serif; }

.wires { position: absolute; left: 0; top: 0; }

/* nodes */
.node { position: absolute; background: linear-gradient(rgba(24, 27, 24, .9), rgba(10, 13, 10, .94) 60%); border-radius: 5px; box-shadow: 0 0 1px 1px #0c0c0c, 0 2px 4px rgba(0, 0, 0, .8); }
.node header { height: 20px; margin-bottom: 3px; padding: 1px 5px 0 8px; display: flex; align-items: center; gap: 4px; border-radius: 4px 4px 0 0; box-shadow: inset 0 1px 0 rgba(255, 255, 255, .35); white-space: nowrap; text-shadow: 1px 1px 0 rgba(0, 0, 0, .5); }
.node header h4 { font-weight: 700; color: #ececec; }
.node header p { color: #82927c; font-style: italic; }
.node header.two { height: 34px; align-items: flex-start; padding-top: 3px; }
.node header.two .f { line-height: 16px; }
.node header.two h4 { margin-bottom: 1px; }
.node .red { gap: 3px; background: linear-gradient(90deg, #8c1818 30%, #6d1c1c 60%, #333030); }
.blue { background: linear-gradient(rgba(20, 30, 36, .3), transparent), linear-gradient(90deg, #5288aa, #355a71 18%, #3f7192 42%, #304a59 60%, #27363f); }
.grey { background: linear-gradient(90deg, #777, #9a9a9a 35%, #7b7b7b 60%, #505050); }
.f-node { width: 13px; text-align: center; }
.delegate { flex: none; width: 9px; height: 9px; margin-left: auto; border: 2px solid #f33; border-radius: 2px; background: #200; }
.row { height: 25px; padding: 0 9px; display: flex; align-items: center; gap: 4px; white-space: nowrap; }
.row.exec { height: 24px; }
.row > svg:nth-child(2), .row .out, .row > span:empty + * { margin-left: auto; }
.row label { display: flex; align-items: center; gap: 5px; }
.row .out { display: flex; align-items: center; gap: 4px; }
.row.tall { height: 36px; }
.row label.stack { flex-direction: column; align-items: flex-start; gap: 0; line-height: 13px; }
.stack input { margin-left: 4px; }
.node input, .node-add input { height: 16px; padding: 0 3px; background: transparent; border: 1px solid #b5b5b5; border-radius: 2px; color: #c9c9c9; }
.w-107 { width: 107px; }
.w-83 { width: 83px; }
.w-26 { width: 26px; }
.node .w-16, .node-add .w-16 { width: 16px; }
.str { color: #d400b4; }
.obj { color: #0aa5f5; }
.obj.dim { color: #0c86c8; }
.int { color: #20dca5; }
.bool { color: #8c0000; }
.row.add { margin-top: 6px; padding-right: 8px; justify-content: flex-end; }
.add-pin { display: flex; align-items: center; gap: 6px; color: #fff; }
.dev { height: 17px; margin-top: 4px; text-align: center; line-height: 17px; color: #eee; background: repeating-linear-gradient(135deg, #0d100d 0, #0d100d 10px, #5a5d0a 10px, #5a5d0a 20px); text-shadow: 1px 1px 0 #000; }
.expand { width: 100%; height: 11px; display: grid; place-items: center; color: #d0d0d0; }
.selected { border: 4px solid transparent; border-radius: 8px; background: linear-gradient(#161916, #0c0f0c 60%) padding-box, linear-gradient(#f2ac00, #e88f00 30%, #cf6800) border-box; }

.node-self { position: absolute; display: flex; align-items: center; justify-content: flex-end; gap: 4px; padding-right: 10px; border-radius: 14px; background: radial-gradient(ellipse at 45% 10%, rgba(110, 150, 110, .7), transparent 60%), linear-gradient(#555 0, #333 40%, #161616 42%, #202420); box-shadow: inset 0 1px 0 #888, inset 0 0 0 1px #3a3a3a, 0 1px 4px #000; }
.node-add { position: absolute; display: flex; justify-content: space-between; padding: 7px 8px; border-radius: 10px; background: linear-gradient(#666, #222 11px, #171a17 60%); box-shadow: inset 0 1px 0 #999, 0 1px 4px #000; }
.ins, .outs { display: flex; flex-direction: column; justify-content: space-between; }
.ins div { display: flex; align-items: center; gap: 9px; }
.outs { align-items: flex-end; padding-top: 2px; }
.op { position: absolute; left: 53px; top: 22px; color: #8a8a8a; }

/* places on the graph */
.at-prepare { left: 40px; top: 56px; width: 145px; height: 49px; }
.at-print-1 { left: 348px; top: 56px; width: 183px; height: 120px; }
.at-start { left: 40px; top: 238px; width: 131px; height: 49px; }
.at-print-2 { left: 348px; top: 238px; width: 201px; height: 110px; }
.at-seq { left: 642px; top: 238px; width: 109px; height: 98px; }
.at-self { left: 810px; top: 322px; width: 113px; height: 28px; }
.bubble { position: absolute; }
.at-bubble { left: 945px; top: 210px; }
.at-valid { left: 932px; top: 220px; width: 256px; height: 156px; }
.at-equal { left: 950px; top: 406px; width: 248px; height: 176px; }
.at-add { left: 614px; top: 518px; width: 117px; height: 56px; }
```
